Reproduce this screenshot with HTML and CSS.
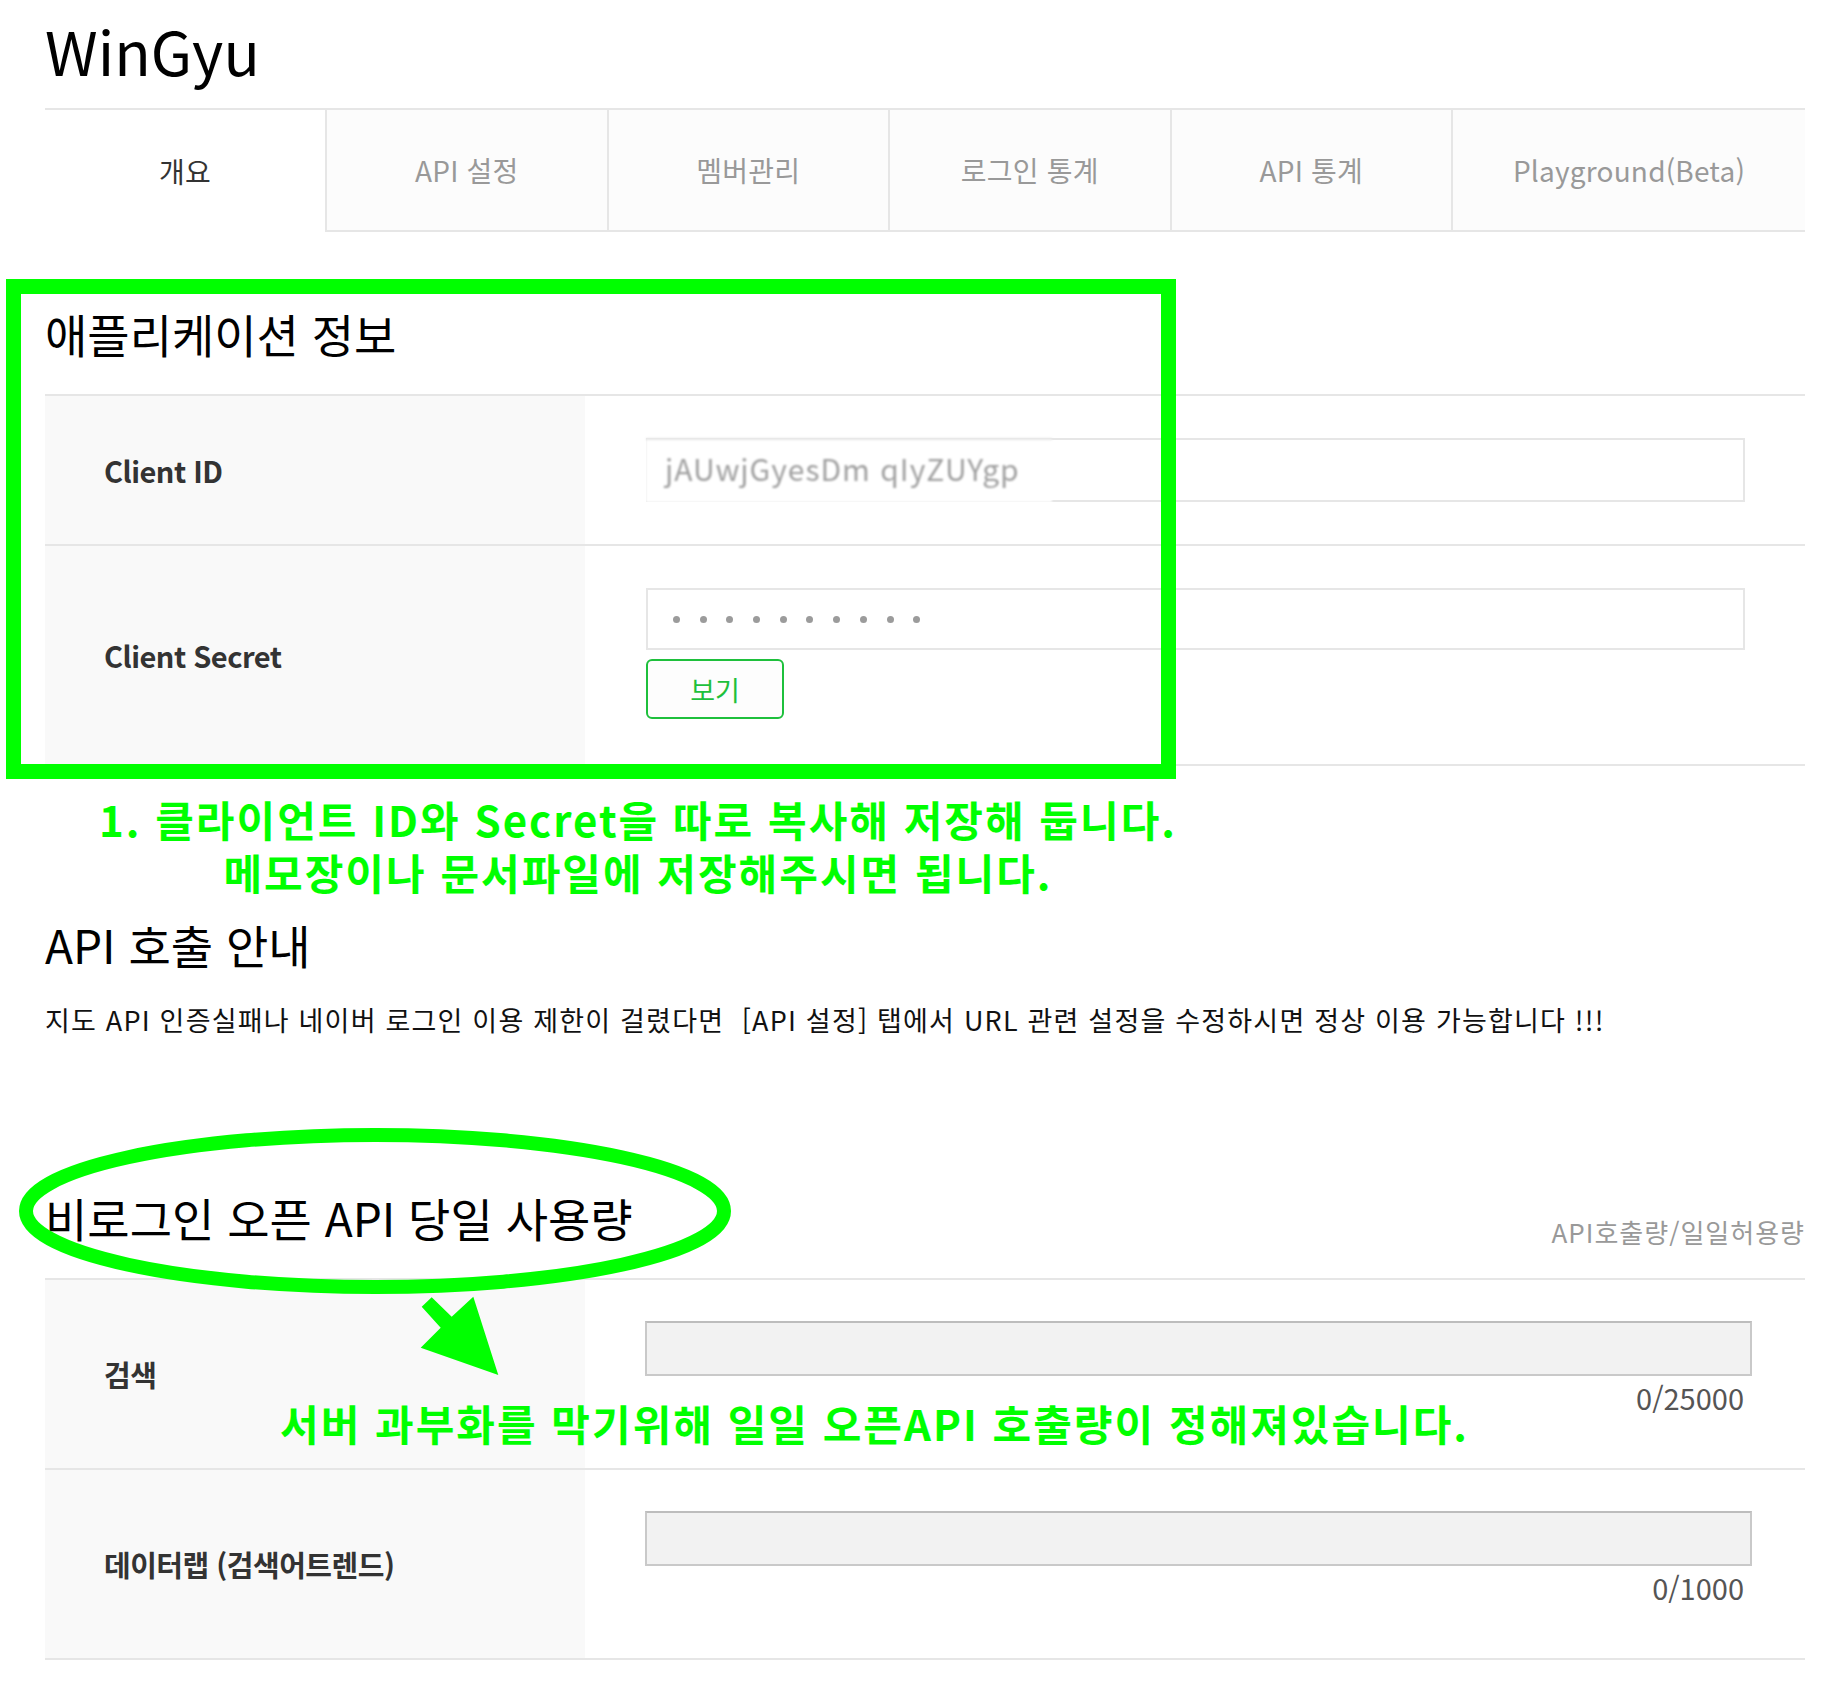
FILE: index.html
```html
<!DOCTYPE html>
<html lang="ko">
<head>
  <meta charset="UTF-8">
  <title>WinGyu - 애플리케이션 개요</title>
  <link rel="stylesheet" href="styles.css">
</head>
<body>

<div class="page">
  <h1 class="brand">WinGyu</h1>

  <nav class="tabs">
    <a class="tab active">개요</a>
    <a class="tab">API 설정</a>
    <a class="tab">멤버관리</a>
    <a class="tab">로그인 통계</a>
    <a class="tab">API 통계</a>
    <a class="tab last">Playground(Beta)</a>
  </nav>

  <section class="app-info">
    <h2 class="title">애플리케이션 정보</h2>
    <div class="rows">
      <div class="row">
        <div class="label">Client ID</div>
        <div class="value">
          <div class="field">
            <span class="patch">jAUwjGyesDm qIyZUYgp</span>
          </div>
        </div>
      </div>
      <div class="row">
        <div class="label">Client Secret</div>
        <div class="value tall">
          <div class="field dots">
            <i></i><i></i><i></i><i></i><i></i><i></i><i></i><i></i><i></i><i></i>
          </div>
          <button class="btn-show">보기</button>
        </div>
      </div>
    </div>
  </section>

  <p class="memo">1. 클라이언트 ID와 Secret을 따로 복사해 저장해 둡니다.<br>메모장이나 문서파일에 저장해주시면 됩니다.</p>

  <section class="guide">
    <h2 class="title">API 호출 안내</h2>
    <p class="desc">지도 API 인증실패나 네이버 로그인 이용 제한이 걸렸다면 &nbsp;[API 설정] 탭에서 URL 관련 설정을 수정하시면 정상 이용 가능합니다 !!!</p>
  </section>

  <section class="usage">
    <div class="usage-head">
      <h2 class="title">비로그인 오픈 API 당일 사용량</h2>
      <span class="unit">API호출량/일일허용량</span>
    </div>
    <div class="rows">
      <div class="row">
        <div class="label">검색</div>
        <div class="value meter">
          <div class="bar"></div>
          <div class="count">0/25000</div>
        </div>
      </div>
      <div class="row">
        <div class="label">데이터랩 (검색어트렌드)</div>
        <div class="value meter">
          <div class="bar"></div>
          <div class="count">0/1000</div>
        </div>
      </div>
    </div>
  </section>
</div>

<!-- annotations drawn over the screenshot -->
<div class="mark-box"></div>
<svg class="mark-ellipse" width="712" height="166" viewBox="0 0 712 166">
  <ellipse cx="356" cy="83" rx="349" ry="76" fill="none" stroke="#00ff00" stroke-width="14"/>
</svg>
<svg class="mark-arrow" width="90" height="92" viewBox="0 0 90 92">
  <polygon points="16.7,7.3 36.7,26.7 58.3,6.7 83.3,85 5.7,57.7 25.7,37.7 6.7,16.7" fill="#00ff00"/>
</svg>
<p class="memo memo-float">서버 과부화를 막기위해 일일 오픈API 호출량이 정해져있습니다.</p>

</body>
</html>
```

FILE: styles.css
```css
body {
  margin: 0;
  position: relative;
  font-family: "Noto Sans CJK KR", "Noto Sans", sans-serif;
  color: #111;
  background: #fff;
}

.page {
  width: 1760px;
  margin-left: 45px;
}

.brand {
  margin: 15px 0 23px;
  font-size: 60px;
  line-height: 70px;
  font-weight: 400;
  color: #000;
}

/* tabs */
.tabs {
  display: flex;
  height: 124px;
  border-top: 2px solid #e6e6e6;
  box-sizing: border-box;
}

.tab {
  width: 281.5px;
  box-sizing: border-box;
  display: flex;
  align-items: center;
  justify-content: center;
  font-size: 28px;
  color: #999;
  background: #fcfcfc;
  border-left: 2px solid #e6e6e6;
  border-bottom: 2px solid #e6e6e6;
  letter-spacing: 0.2px;
}

.tab.active {
  width: 280px;
  background: #fff;
  color: #333;
  border-left: none;
  border-bottom: none;
}

.tab.last {
  flex: 1;
}

/* section titles */
.title {
  margin: 0;
  font-size: 46px;
  line-height: 60px;
  font-weight: 400;
  color: #000;
}

.app-info {
  margin-top: 71px;
}

.app-info .title {
  margin-bottom: 31px;
}

/* label / value rows */
.rows {
  border-bottom: 2px solid #e6e6e6;
}

.row {
  display: flex;
  border-top: 2px solid #e6e6e6;
}

.label {
  width: 481px;
  padding-left: 59px;
  background: #f9f9f9;
  display: flex;
  align-items: center;
  font-size: 29px;
  font-weight: 700;
  color: #333;
  letter-spacing: -0.5px;
}

.value {
  flex: 1;
  padding: 42px 60px 42px 61px;
}

.value.tall {
  padding-bottom: 45px;
}

.field {
  position: relative;
  height: 64px;
  border: 2px solid #e6e6e6;
  box-sizing: border-box;
}

.patch {
  position: absolute;
  left: -2px;
  top: -2px;
  bottom: -2px;
  width: 406px;
  background: #fff;
  border-top: 2px solid #e6e6e6;
  padding-left: 19px;
  box-sizing: border-box;
  font-size: 30px;
  line-height: 56px;
  letter-spacing: 1px;
  color: #a0a0a0;
  filter: blur(0.9px);
}

.field.dots {
  height: 62px;
  display: flex;
  align-items: center;
  gap: 19.7px;
  padding-left: 25px;
}

.field.dots i {
  width: 7px;
  height: 7px;
  border-radius: 50%;
  background: #9b9b9b;
}

.btn-show {
  display: block;
  margin-top: 9px;
  width: 138px;
  height: 60px;
  border: 2px solid #1ec03c;
  border-radius: 6px;
  background: #fdfdfd;
  color: #1ec03c;
  font-family: inherit;
  font-size: 27px;
}

/* memo annotations */
.memo {
  margin: 26px 0 0;
  width: 1186px;
  text-align: center;
  font-size: 42px;
  line-height: 53px;
  font-weight: 700;
  color: #00ff00;
  letter-spacing: 2px;
}

.memo-float {
  position: absolute;
  left: 280px;
  top: 1396px;
  width: auto;
  margin: 0;
  text-align: left;
}

/* guide */
.guide {
  margin-top: 16px;
}

.desc {
  margin: 26px 0 0;
  font-size: 27px;
  line-height: 40px;
  color: #111;
  letter-spacing: 1.2px;
}

/* usage */
.usage {
  margin-top: 147px;
}

.usage-head {
  display: flex;
  justify-content: space-between;
  align-items: flex-end;
  padding-bottom: 31px;
}

.unit {
  font-size: 26px;
  line-height: 30px;
  color: #999;
  letter-spacing: 1px;
}

.value.meter {
  padding: 41px 53px 52px 60px;
}

.bar {
  height: 55px;
  background: #f2f2f2;
  border: 2px solid #c9c9c9;
  border-top-color: #bdbdbd;
  box-sizing: border-box;
}

.count {
  margin-top: 2px;
  padding-right: 8px;
  text-align: right;
  font-size: 29px;
  line-height: 38px;
  color: #555;
}

/* overlays */
.mark-box {
  position: absolute;
  left: 6px;
  top: 279px;
  width: 1170px;
  height: 500px;
  border: 15px solid #00ff00;
  box-sizing: border-box;
}

.mark-ellipse {
  position: absolute;
  left: 19px;
  top: 1128px;
}

.mark-arrow {
  position: absolute;
  left: 415px;
  top: 1290px;
}
```
